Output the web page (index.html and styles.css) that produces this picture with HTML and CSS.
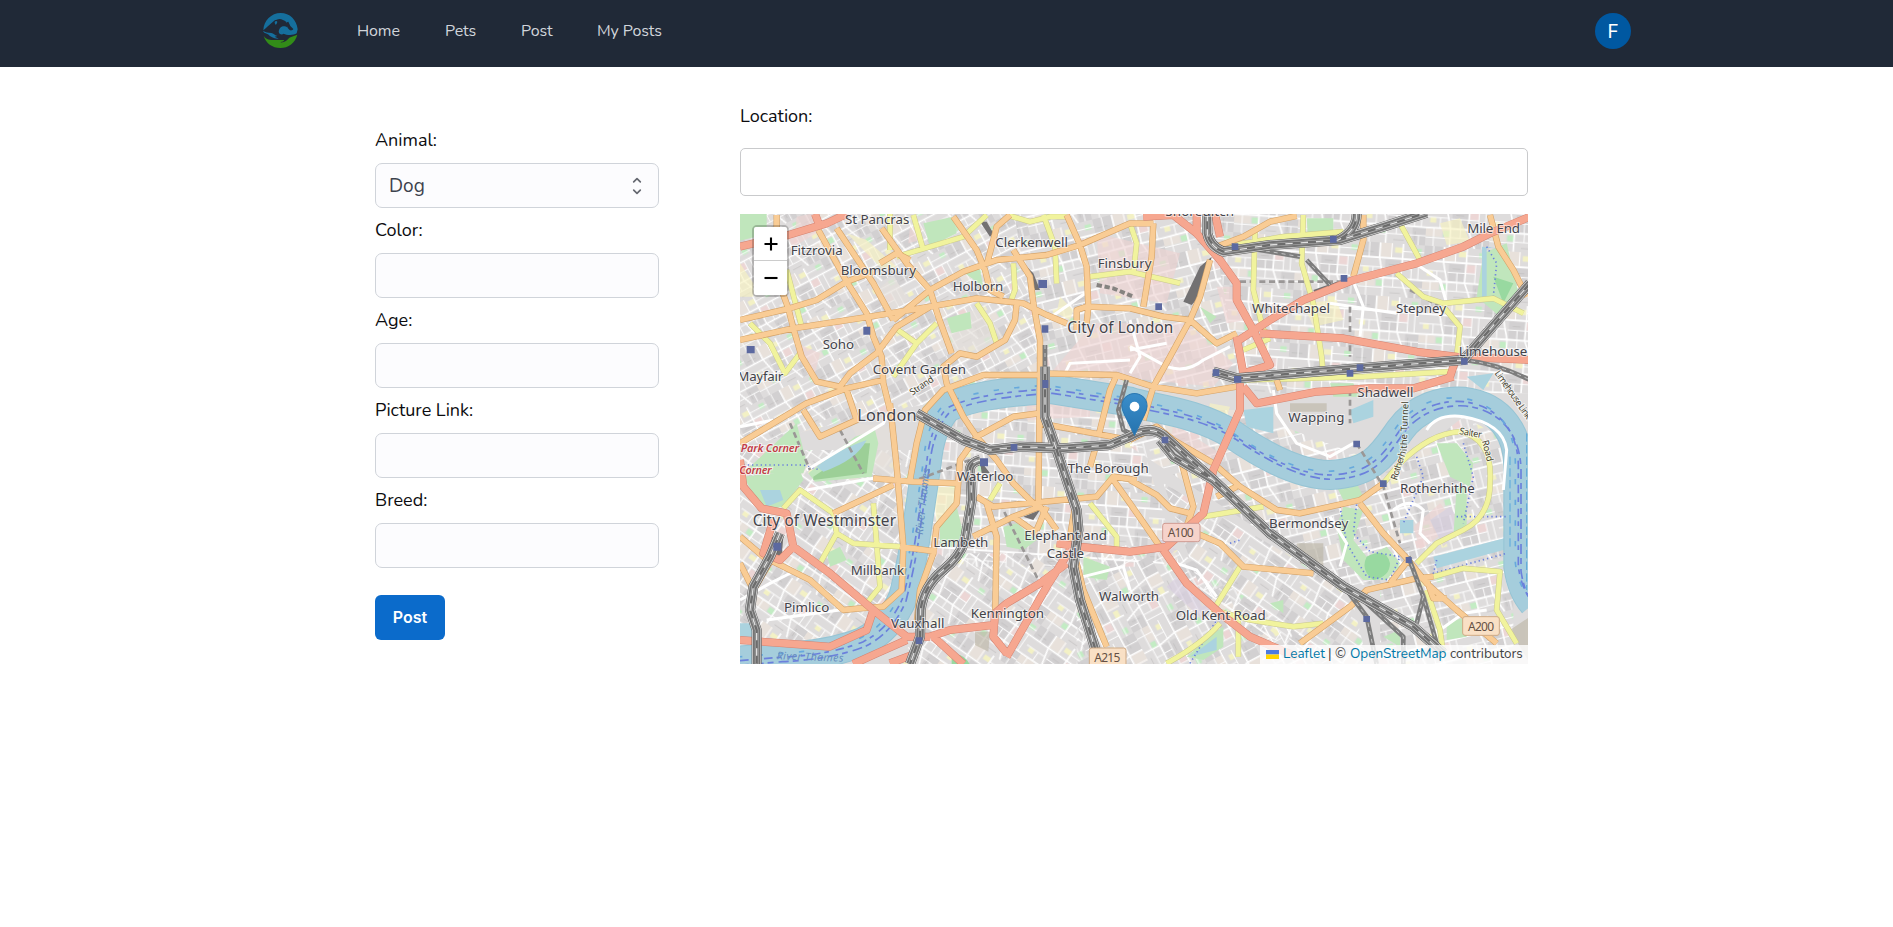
FILE: index.html
```html
<!DOCTYPE html>
<html lang="en">
<head>
<meta charset="utf-8">
<title>Post a pet</title>
<link rel="stylesheet" href="styles.css">
</head>
<body>
<header class="navbar">
  <svg class="logo" viewBox="0 0 105 105" aria-label="Logo">
    <path fill="#156f9d" d="M1 52C2 23 25 0 53 0c27 0 48 20 51 49l-3 12c-8 5-19 6-31 4l-8-3c-4 3-8 3-12 0-6-6-1-18 6-21 6-2 13-1 16 2 2-5 1-12-2-16-9-7-19-12-29-7-11 3-19 14-40 32z"/>
    <path fill="#202937" d="M32 27c2-6 9-7 13-4 0 7-3 12-7 16-3-3-6-6-6-12zm40 1 4-2 6 13 9 9c-2 4-6 5-10 4-5-4-8-8-9-12z"/>
    <path fill="#156f9d" d="M35 27c3-4 6-3 8-1-1 5-3 8-5 9-2-2-3-4-3-8zM0 53c7 5 16 6 25 7 7 1 9 6 18 9l-8 2 12 6c-15 1-24-5-32-13C8 59 3 61 0 53z"/>
    <path fill="#328c18" d="M2 68c8 13 20 13 32 13h30c-1 4-6 5-12 7 12 2 20-7 27-14 7-4 16-5 24-9-6 24-27 40-51 40C28 105 8 90 2 68z"/>
  </svg>
  <nav class="links">
    <a class="n-home">Home</a><a class="n-pets">Pets</a><a class="n-post">Post</a><a class="n-my">My Posts</a>
  </nav>
  <div class="avatar">F</div>
</header>
<main class="content">
  <form class="pet-form">
    <label>Animal:</label>
    <div class="field select"><span>Dog</span>
      <svg class="chevrons" viewBox="0 0 10 18"><path d="M1.7 4.900 5 1.700l3.300 3.200M1.700 13.100 5 16.300l3.300-3.200"/></svg>
    </div>
    <label>Color:</label><div class="field"></div>
    <label>Age:</label><div class="field"></div>
    <label>Picture Link:</label><div class="field"></div>
    <label>Breed:</label><div class="field"></div>
    <button type="button" class="submit">Post</button>
  </form>
  <section class="location">
    <label>Location:</label>
    <div class="search"></div>
    <div class="map">
      <svg class="tiles" viewBox="30 372 2364 1350" preserveAspectRatio="none">
        <defs>
          <g id="blocks">
            <path fill="#d2d0d1" d="M0 0h70v52H0zM96 62h60v66H96zM190 130h50v70h-50z"/>
            <path fill="#e8e1db" d="M76 0h46v52H76zM0 134h62v30H0z"/>
            <path fill="#ecd6d5" d="M162 62h34v30h-34z"/>
            <path fill="#c3ecc4" d="M66 140h26v22H66zM206 14h24v20h-24z"/>
            <path fill="#f3f1c5" d="M130 14h28v20h-28zM14 92h22v20H14z"/>
            <path fill="none" stroke="#b9b7b8" stroke-width="2" d="M10 36h40M110 80h30M200 150v34M120 186h40"/>
            <path fill="none" stroke="#fff" stroke-width="6" d="M0 56h240M0 132l95-2 145 2M74 0v56l18 76v68M160 0v56l-2 74 28 70"/>
            <path fill="none" stroke="#fff" stroke-width="3.500" d="M34 0v56M0 92h86M52 92v40M92 94h104M196 56v76M118 0v56M160 28h80M30 132v68M0 168h92M92 164h148M130 132v32M128 94v38M214 164v36M222 56v76"/>
          </g>
          <pattern id="pa" width="240" height="200" patternUnits="userSpaceOnUse" patternTransform="rotate(-28) scale(.72)"><use href="#blocks"/></pattern>
          <pattern id="pb" width="240" height="200" patternUnits="userSpaceOnUse" patternTransform="rotate(4) scale(.8)"><use href="#blocks"/></pattern>
          <pattern id="pc" width="240" height="200" patternUnits="userSpaceOnUse" patternTransform="rotate(35) scale(.78)"><use href="#blocks"/></pattern>
          <pattern id="pd" width="240" height="200" patternUnits="userSpaceOnUse" patternTransform="rotate(-14) scale(.8)"><use href="#blocks"/></pattern>
          <pattern id="pe" width="240" height="200" patternUnits="userSpaceOnUse" patternTransform="rotate(62) scale(.76)"><use href="#blocks"/></pattern>
          <path id="river" d="M30 1712L150 1702Q300 1695 400 1655Q480 1615 520 1520Q550 1400 560 1320L590 1120Q600 1010 650 955Q730 910 960 897L1200 935C1260 955 1400 965 1510 1035C1590 1090 1700 1155 1800 1155C1930 1150 1960 1090 2010 1020C2060 950 2140 930 2200 935C2320 950 2365 1040 2365 1130V1430Q2375 1500 2410 1540"/>
          <path id="orange" d="M30 690L180 655 260 630 350 575 430 545M30 750L190 715 420 680 600 650 740 625 880 640 950 675 1010 700M140 375V560L175 655 190 715 215 800 260 875 330 890 360 850 440 790 500 710 600 650M265 420L320 520 350 575 410 670 430 740 455 800 460 880 480 960M320 415L430 580 490 690M455 415L530 520 600 600 625 680 665 790M490 690L600 600 700 545 800 510 950 495 1050 465 1200 400 1270 400M670 380L740 480 765 540 780 600 820 620M770 525L790 450 800 410 840 375M1010 375L1050 465 1070 530 1075 650 1070 700M850 480L900 560 910 640 930 750 930 850 925 1240M860 640L855 690 825 750 740 800 690 790 640 830 650 880 700 980 740 1040M450 520L500 490 540 510M930 855L760 855 640 900 585 960 560 1060 540 1170M1040 720V660L1070 650 1200 655 1300 680 1380 690 1410 620 1440 510M1270 400L1265 500 1240 650M1380 690L1320 800 1270 890 1240 990M1380 690L1460 760 1520 730M1460 470L1540 440 1620 395 1700 378M1900 375V450L1870 560M2280 375L2305 470 2350 540 2390 620M930 850L1160 855 1270 890 1400 910 1520 890M1160 855L1140 900 1105 1040M30 1060L130 1000 230 940 350 895 460 870M220 960L270 1040 380 990 350 900M480 940L500 1130 510 1250 520 1370 515 1500 460 1550 390 1555 340 1560 240 1470 100 1400 30 1340M430 1165L550 1175 680 1180M510 1370L620 1385M310 1270L490 1185M740 1040L690 1110 680 1240 620 1310 610 1390 570 1500 560 1600M740 1040L800 1110 850 1180 920 1250M740 1040L850 980 925 970M930 1000L1200 1050M740 1220L790 1250 1100 1220 1150 1160 1220 1170M730 1340L850 1280 930 1250 980 1320M770 1240L800 1340 795 1600M850 1280L920 1330M950 1250L920 1320M1040 1220L1020 1340 1060 1500 1130 1670M1150 1170L1200 1240 1290 1370M1100 1060L1080 1130M1200 1170L1280 1215 1320 1255 1380 1270M1200 1050L1280 1010 1330 1050 1450 1120 1530 1190 1640 1260 1710 1270 1890 1230 1960 1180M1350 1100L1390 1250 1370 1310M1400 1330L1470 1360 1540 1430 1750 1450M1520 1190L1460 1220M1890 1240L1960 1330 2035 1410 2090 1480 2180 1560 2300 1660M2035 1410L1980 1480M1710 1660L1860 1550 1910 1500 2060 1465 2110 1460M2090 1470L2110 1525H2150M1640 870L1650 900M30 1420L70 1500 130 1400"/>
          <path id="red" d="M30 470L175 435 290 400 350 372M255 372L270 410M1240 380L1330 375 1400 430 1470 510 1520 580V630L1570 720 1620 825 1540 850 1520 740M1400 372V430M1455 372L1470 440M1520 755L1620 690 1720 630 1870 570 2060 520 2200 470 2280 430 2400 380M1590 730L1840 745 2060 785 2180 800 2160 860M2180 800L2400 810M1540 890L1580 940 1760 905 1920 895 2050 895 2170 860M1530 880V960L1450 1140 1420 1270 1310 1370 1200 1385 1050 1370 980 1360M1300 1380L1370 1480 1470 1570 1560 1640 1700 1700M1020 1380L950 1490 830 1700M1010 1420L930 1480 830 1540 795 1570 790 1640 830 1690M600 1640L660 1620 790 1605M610 1640L700 1722M30 1110L40 1190 95 1255 170 1270 190 1370 300 1450 430 1560 530 1640 600 1640M130 1290L100 1390 150 1410 190 1370M430 1560L410 1620 300 1670 160 1660 30 1650M370 1722L440 1690 530 1650M480 1720L560 1690"/>
          <path id="yellow" d="M500 500L700 440 770 375M550 375L580 480M850 520L855 600 840 640M940 375L975 470 980 580M830 375L900 395 960 380 1010 380M170 540L215 710M60 700L120 760 165 850 210 790M490 710L560 760 620 700M740 640L780 700 800 760M560 760L490 860M1200 400L1220 460 1210 550M1575 420L1570 600 1600 720 1620 735M1720 375L1715 520 1750 640 1775 800 1780 860M1480 470L1660 440 1840 425M2010 400L2070 510M2000 550L2080 620 2140 640 2290 625 2380 670M2140 650L2190 710 2180 800M1080 560L1200 545 1350 580M1550 870L1900 860 2160 845M1540 780L1620 745M160 1255L210 1200 310 1270 320 1330 370 1360 510 1370M320 1330L270 1420M430 1240L440 1360 450 1490 410 1540M810 1180L780 1230M1080 1240L1160 1340V1380M1420 1280L1600 1250M1530 1430L1450 1560 1560 1590 1690 1610 1780 1600M1960 1180L2010 1120Q2100 1030 2190 1025Q2290 1045 2280 1180 2280 1280 2200 1320L2120 1360 2060 1420M2110 1460L2200 1435 2310 1445 2300 1560 2360 1660M2090 1500L2130 1620 2140 1690M1310 1720Q1420 1660 1470 1600M1525 1560V1700M480 372V480"/>
          <path id="rail" d="M560 970L700 1050 780 1080 870 1070 1000 1075 1140 1065 1200 1040Q1265 1000 1310 1045L1450 1170 1620 1330 1840 1490 2050 1610 2140 1690M750 1110Q710 1120 722 1160L725 1230 705 1350Q690 1400 640 1440 580 1490 572 1560L570 1640 540 1722M945 830V980L980 1080 1040 1260 1045 1320 1030 1430 1050 1530 1100 1690M1450 845L1520 865 1720 848 2200 810 2400 580M1432 372V430Q1440 470 1480 485L1620 465 1830 450 1960 410 2090 368M1880 372Q1880 425 1820 452M1290 1050L1330 1100 1450 1170M150 1330L120 1400 70 1490 60 1560 80 1620V1722"/>
          <path id="rail-thin" d="M945 765V840M1190 870L1165 960 1180 1020 1220 1040M1560 475L1710 500M1730 510L1800 585M2200 810Q2300 820 2400 870M2035 1400L2080 1520 2120 1660M1850 1500L1910 1580 1940 1722M2080 1520L2060 1600M1910 1540L2020 1640V1722M1200 1045L1240 1030"/>
        </defs>
        <path fill="#dedcdc" d="M0 350h2420v1400H0z"/>
        <path fill="url(#pa)" d="M0 350H850L940 870 650 930 400 980 0 1080z"/>
        <path fill="url(#pd)" d="M850 350h590l90 550-600-40z"/>
        <path fill="url(#pb)" d="M1440 350h980v560H1530z"/>
        <path fill="url(#pb)" d="M620 950l580 0 150 480-350 0-420 0z"/>
        <path fill="url(#pc)" d="M0 1080l600 0-60 520-540 150z"/>
        <path fill="url(#pc)" d="M620 1390l420 0 30 360-560 0z"/>
        <path fill="url(#pe)" d="M1040 1360l300 20 500 340-800 30z"/>
        <path fill="url(#pd)" d="M1200 960l330 0 500 190 0 320-180 20-650-420z"/>
        <path fill="url(#pc)" d="M1300 1180l560 320 60 250-480-170z"/>
        <path fill="url(#pd)" d="M1950 1180l250-200 150 80v700h-400z"/>
        <g opacity=".65">
          <path fill="#efd5d4" d="M1090 700l280 0 140 120-60 70-480-50zM1100 430l250 60-40 150-200-30zM200 380l50-10 10 60-70 40zM1460 590l60 0 30 100-60 10zM540 410l30 40-35 10zM890 940l190 0 0 40-190 10zM1330 1000l140 90-40 30-110-60zM2050 1310l80-70 50 60-110 80zM200 760l70 30-20 80z"/>
          <path fill="#e5e0db" d="M620 700l140-50 60 90-90 60-90-20zM360 1000l130 10 10 150-60 0zM440 600l50-40 50 70-60 30z"/>
          <path fill="#f8f3c2" d="M350 430l60 20 90 80-40 10zM990 620l40 40-10 30-40-20zM1720 640l100-10 20 60-90 20zM610 1190l70 0 0 60-60 60zM2130 400l60-15 30 70-70 10zM1440 940l60 10-20 60-50-30zM30 520l40 60v40H30zM1550 1040l40 10-20 40z"/>
          <path fill="#d9cfe0" d="M1310 1490l110 100 30-40-110-90zM2100 1290l60-40 40 60-60 60zM1280 1340l60 40-30 20z"/>
          <path fill="#beb8a8" d="M1700 1360l80 0 0 80-70-20zM735 1625l45 0-5 60-40-20zM2340 1620l60-40v140zM1680 940l110 0 0 25-110 0z"/>
        </g>
        <g fill="#c0e6bc">
          <path d="M30 372h80v60l-80 20z"/><path d="M580 400l90-20 10 50-80 40zM650 685l70-20 5 50-60 15zM705 550l45-10 10 50zM1730 385h80v60l-75 10z"/>
          <path d="M60 1130l140-130 30 120-10 30H40z"/><path d="M40 1160l170-20 10 30-60 80-60 10zM235 1150l140-110 60-20 10 40-20 100-170 15z"/>
          <path d="M630 1370l0-70 50-50 20 80-30 40zM580 950l50-50 30-15-70 90zM2260 490l70-30 40 170-60 50-70-60z"/>
          <path d="M1840 1250l60 10-30 90 40 50 60-30 40 50-40 50-70 0-60-60-20-100zM2120 1060l60 0 50 60-10 70-60-30zM2180 1190l30 0 0 130-40 20zM1820 1190l60-10 20 40-60 10zM1060 1400l80 30-10 40-70-10zM1370 1700l80-70 30-20 0 60-60 40z"/>
          <path d="M820 1310l40-10 60 50-40 30-50-10zM1620 1540l40-10 0 40zM1410 650l50 30-20 20zM290 1390l40-20 20 40-50 20zM2150 1600l60-20 0 60-60 10zM1960 1640l50-20 0 50zM1800 880l70 0 20 40-80 0z"/>
        </g>
        <path fill="#9ccf97" d="M250 1160l150-100 20 0-10 90-160 20z"/>
        <path fill="#98d9a0" d="M1910 1400q60-30 70 20 0 40-50 50-40-30-20-70zM665 1695q40-10 60 40h-60zM2290 560l60 20-30 60z"/>
        <path fill="#abd3df" d="M90 1200l60 0 10 30-50 20zM260 1130q60-50 150-80-30 60-130 95zM2330 480l-60-10 0 150-14 0 0-150zM1540 960l90-10 0 80-80-20zM1860 960l70-30 0 50-60 20zM2110 1400l230-60 0 35-220 60zM2010 1290l40 0 0 40-40 0zM1380 1700l80-60 0 40zM2210 860l80-10-30 50zM30 1600l40 0v50H30z"/>
        <use href="#river" fill="none" stroke="#96c4d4" stroke-width="90"/>
        <use href="#river" fill="none" stroke="#a5cddc" stroke-width="84"/>
        <g fill="none" stroke="#6b80dc" stroke-width="5">
          <use href="#river" stroke-dasharray="26 12 14 20"/>
          <use href="#river" stroke-dasharray="18 15 30 12" transform="translate(8 13)"/>
          <use href="#river" stroke-dasharray="16 46" transform="translate(-9 -11)" stroke="#67a9dc"/>
          <path stroke-dasharray="4 9" stroke-width="5" d="M40 1125H220L270 1140M1830 1250L1850 1360 1910 1460 1980 1470 2010 1400 1920 1385 1870 1330 1880 1240M2120 1410L2110 1450 2330 1390M2060 1100L2080 1160 2020 1300M2200 1060L2230 1160 2200 1300M2270 470L2300 520 2290 620M1380 1720L1460 1590M1500 1360L1530 1350M2180 1280H2330"/>
          <path stroke="#58a8db" stroke-width="3" stroke-dasharray="25 10" d="M2390 1030V1500M2340 1100V1380"/>
        </g>
        <g fill="none" stroke="#fff" stroke-width="9">
          <path d="M30 1010L130 990M230 1140L460 1000 480 960M230 1200L430 1165M1200 770L1310 830Q1370 850 1420 810L1500 770M1200 690L1230 800 1200 850M950 690L1080 600M1000 860L1020 820 1200 810M1310 760L1200 780M2040 510L2130 570 2150 640M1870 575L1900 650 1890 740M1800 640L2000 670M1630 900L1640 970 1700 1060 1800 1100 1870 1060M2090 1020Q2120 970 2200 980 2320 1000 2330 1080L2320 1200M1990 1260Q2040 1220 2080 1260L2070 1330 2100 1360M1340 1420L1400 1440 1460 1520M30 1530L120 1480 200 1440M110 1590L400 1550M1060 1460L1180 1430 1200 1500M1800 1280L1850 1360 1830 1430M2130 1620L2200 1570 2270 1560"/>
        </g>
        <g fill="none" stroke="#9a9796" stroke-width="8" stroke-dasharray="18 11">
          <path d="M180 1000L240 1140M330 1020L400 1150M1860 900V1000M1880 1060L1960 1190 2010 1360M810 1240L890 1400 930 1480M720 1110L560 1170M1530 575H1850M2040 600L2130 650M1860 650V800"/>
        </g>
        <g fill="#737172"><path d="M1410 530l35-30-20 100-40 45-25-10zM750 395l20 0 20 35-10 10zM880 520l30 30 20 50-15 0zM1750 600l70-25 10 15-70 25zM880 1280l50-20-20 30zM125 1340l35 0-5 60-35 0zM750 1110l30 40-25 0z"/></g>
        <path d="M1100 585l50 10 60 25" fill="none" stroke="#858380" stroke-width="12" stroke-dasharray="16 8"/>
        <g fill="none" stroke-linejoin="round">
          <use href="#yellow" stroke="#c9c88e" stroke-width="17"/><use href="#yellow" stroke="#f1f39d" stroke-width="14"/>
          <use href="#orange" stroke="#d3a268" stroke-width="19"/><use href="#orange" stroke="#f9cc95" stroke-width="15.500"/>
          <use href="#red" stroke="#d58371" stroke-width="24"/><use href="#red" stroke="#f6a790" stroke-width="21"/>
          <use href="#rail-thin" stroke="#7d7d7d" stroke-width="14"/><use href="#rail-thin" stroke="#c4c4c4" stroke-width="3" stroke-dasharray="12 12"/>
          <use href="#rail" stroke="#555" stroke-width="30"/><use href="#rail" stroke="#d4d4d4" stroke-width="27"/><use href="#rail" stroke="#747474" stroke-width="22"/><use href="#rail" stroke="#b5b5b5" stroke-width="11"/><use href="#rail" stroke="#6c6c6c" stroke-width="7"/><use href="#rail" stroke="#e0e0e0" stroke-width="4" stroke-dasharray="22 24"/>
        </g>
        <path fill="#5c69a0" d="M400 710h21v24h-21zM50 768h24v22H50zM925 570h26v24h-26zM935 706h20v22h-20zM1505 460h20v20h-20zM1800 438h20v20h-20zM1832 555h20v20h-20zM1276 640h20v20h-20zM1448 838h20v20h-20zM1512 858h22v20h-22zM1880 823h20v20h-20zM1850 840h20v20h-20zM2193 804h20v20h-20zM750 1105h24v24h-24zM842 1062h20v20h-20zM130 1358h24v24h-24zM557 1642h20v20h-20zM1870 1052h20v20h-20zM1950 1171h20v20h-20zM2027 1401h18v18h-18zM1900 1578h20v18h-20zM1295 1040h20v20h-20zM937 870h18v24h-18z"/>
        <g class="place">
          <text x="345" y="402" textLength="193">St Pancras</text><text x="182" y="495" textLength="156">Fitzrovia</text>
          <text x="332" y="556" textLength="226">Bloomsbury</text><text x="796" y="472" textLength="218">Clerkenwell</text>
          <text x="1103" y="533" textLength="162">Finsbury</text><text x="668" y="602" textLength="152">Holborn</text>
          <text x="278" y="777" textLength="94">Soho</text><text x="428" y="851" textLength="280">Covent Garden</text>
          <text x="22" y="873" textLength="138">Mayfair</text><text x="1566" y="670" textLength="234">Whitechapel</text>
          <text x="1998" y="670" textLength="150">Stepney</text><text x="2212" y="429" textLength="158">Mile End</text>
          <text x="2186" y="799" textLength="206">Limehouse</text><text x="1306" y="378" textLength="206">Shoreditch</text>
          <text x="1882" y="922" textLength="168">Shadwell</text><text x="680" y="1173" textLength="170">Waterloo</text>
          <text x="1013" y="1148" textLength="243">The Borough</text><text x="883" y="1351" textLength="248">Elephant and</text>
          <text x="950" y="1404" textLength="112">Castle</text><text x="610" y="1372" textLength="165">Lambeth</text>
          <text x="362" y="1454" textLength="160">Millbank</text><text x="162" y="1567" textLength="136">Pimlico</text>
          <text x="722" y="1585" textLength="220">Kennington</text><text x="483" y="1614" textLength="160">Vauxhall</text>
          <text x="1107" y="1532" textLength="180">Walworth</text><text x="1675" y="996" textLength="168">Wapping</text>
          <text x="2010" y="1210" textLength="224">Rotherhithe</text><text x="1617" y="1315" textLength="238">Bermondsey</text>
          <text x="1337" y="1590" textLength="270">Old Kent Road</text>
          <g class="city"><text x="1012" y="728" textLength="318">City of London</text><text class="capital" x="382" y="993" textLength="178">London</text><text x="68" y="1307" textLength="430">City of Westminster</text></g>
          <g class="stop"><text x="32" y="1085" textLength="175">Park Corner</text><text x="28" y="1153" textLength="97">Corner</text></g>
          <g class="street">
            <text transform="translate(547 917) rotate(-34)" textLength="80">Strand</text>
            <text transform="translate(2000 1172) rotate(-72)" textLength="90">Rotherh</text>
            <text transform="translate(2030 1084) rotate(-88)" textLength="150">ithe Tunnel</text>
            <text transform="translate(2187 1032) rotate(10)" textLength="68">Salter</text>
            <text transform="translate(2256 1053) rotate(76)" textLength="65">Road</text>
            <text transform="translate(2293 850) rotate(55)" textLength="170">Limehouse Link</text>
          </g>
          <g class="water"><text transform="translate(578 1335) rotate(-84)" textLength="200">River Thames</text><text transform="translate(140 1708) rotate(2)" textLength="200">River Thames</text></g>
        </g>
        <g class="shield">
          <rect x="1298" y="1300" width="112" height="55" rx="7" fill="#f6d3cb" stroke="#cf9b92"/><text x="1313" y="1341" textLength="78">A100</text>
          <rect x="2198" y="1580" width="110" height="56" rx="7" fill="#f9e0c5" stroke="#cfaa85"/><text x="2214" y="1622" textLength="78">A200</text>
          <rect x="1078" y="1674" width="110" height="56" rx="7" fill="#f9e0c5" stroke="#cfaa85"/><text x="1093" y="1717" textLength="78">A215</text>
        </g>
      </svg>
      <svg class="marker" viewBox="0 0 25 41">
        <defs><linearGradient id="pin" x2="0" y2="1"><stop stop-color="#3a8ecb"/><stop offset="1" stop-color="#2673ae"/></linearGradient></defs>
        <path fill="url(#pin)" stroke="#2c79b3" stroke-width="1" d="M12.500.5C5.800.5.5 5.900.5 12.400c0 3 1.300 6 2.600 8.600l9.400 19.100L21.900 21c1.300-2.600 2.600-5.600 2.600-8.600C24.500 5.900 19.200.5 12.500.5z"/>
        <circle cx="12.500" cy="13" r="4.600" fill="#fff"/>
      </svg>
      <div class="zoom">
        <span><svg viewBox="0 0 14 14"><path d="M.5 7h13M7 .5v13"/></svg></span>
        <span><svg viewBox="0 0 14 14"><path d="M.5 7h13"/></svg></span>
      </div>
      <div class="credit"><svg class="flag" viewBox="0 0 13 9"><path fill="#4c7be1" d="M0 0h13v4.500H0z"/><path fill="#ffd500" d="M0 4.500h13V9H0z"/></svg><a class="c-leaf">Leaflet</a><span class="bar">|</span><span class="copy">©</span><a class="c-osm">OpenStreetMap</a><span class="c-con">contributors</span></div>
    </div>
  </section>
</main>
</body>
</html>
```

FILE: styles.css
```css
* { box-sizing: border-box; }
body { margin: 0; background: #fff; color: #0c0c0f; font-family: Nunito, Lato, "Open Sans", sans-serif; font-size: 18px; }
.navbar { height: 67px; background: #202937; display: flex; align-items: flex-start; padding: 13px 262px 0 263px; }
.logo { width: 35px; height: 35px; flex: none; }
.links { display: flex; margin-left: 59px; padding-top: 8px; color: #d1d5db; font-size: 16px; line-height: 20px; gap: 45px; white-space: nowrap; }
.links a { letter-spacing: -.1px; }
.n-home { width: 43px; } .n-pets { width: 31px; } .n-post { width: 31px; } .n-my { width: 65px; }
.avatar { width: 36px; height: 36px; margin-left: auto; border-radius: 50%; background: #0058a1; color: #fff; font: 400 19px/37px Inter, sans-serif; text-align: center; }
.content { display: flex; padding-left: 375px; }
.pet-form { width: 284px; padding-top: 56px; display: flex; flex-direction: column; }
.pet-form label { height: 40px; line-height: 34px; }
.field { height: 45px; margin-bottom: 5px; border: 1px solid #d0d4da; border-radius: 7px; background: #fcfcfe; }
.select { display: flex; justify-content: space-between; align-items: center; padding: 0 16px 0 13px; color: #3c424d; font-size: 19px; }
.chevrons { width: 10px; height: 18px; fill: none; stroke: #656870; stroke-width: 1.7; stroke-linecap: round; stroke-linejoin: round; }
.submit { width: 70px; height: 45px; margin-top: 22px; border: 0; border-radius: 6px; padding: 0; background: #0b6bcb; color: #fff; font: 600 16px/45px Inter, sans-serif; }
.location { width: 788px; margin-left: 81px; padding-top: 33px; display: flex; flex-direction: column; }
.location label { height: 48px; line-height: 32px; }
.search { height: 48px; border: 1px solid #c9cacc; border-radius: 5px; }
.map { position: relative; height: 450px; margin-top: 18px; overflow: hidden; background: #ddd; }
.tiles { display: block; width: 788px; height: 450px; }
.place { font: 40px "Noto Sans", sans-serif; fill: #43434a; stroke: rgba(255,255,255,.6); stroke-width: 6px; paint-order: stroke; }
.city { font-size: 46px; }
.capital { font-size: 49px; }
.stop { font-size: 33px; font-style: italic; font-weight: 600; fill: #c33d48; }
.street { font-size: 28px; fill: #45422d; }
.water { font-size: 32px; font-style: italic; fill: #668dc0; stroke: none; }
.shield { font: 36px "Noto Sans", sans-serif; fill: #655044; stroke-width: 3px; }
.marker { position: absolute; left: 381px; top: 179px; width: 27px; height: 43px; }
.zoom { position: absolute; left: 12px; top: 11px; border: 2px solid rgba(0,0,0,.2); border-radius: 5px; background-clip: padding-box; }
.zoom span { display: flex; width: 33px; height: 34px; align-items: center; justify-content: center; background: #fff; }
.zoom span:first-child { border-bottom: 1px solid #ccc; border-radius: 2px 2px 0 0; }
.zoom span:last-child { border-radius: 0 0 2px 2px; }
.zoom svg { width: 14px; height: 14px; stroke: #000; stroke-width: 2.1; }
.credit { position: absolute; right: 0; bottom: 0; width: 268px; height: 19px; padding: 0 0 1px 6px; display: flex; align-items: center; background: rgba(255,255,255,.8); color: #444; font-size: 13.5px; line-height: 18px; white-space: nowrap; }
.credit a { color: #0078a8; }
.flag { width: 13px; height: 9px; margin-right: 4px; }
.c-leaf { width: 45px; } .bar { width: 7px; } .copy { width: 15px; } .c-osm { width: 100px; }
```
